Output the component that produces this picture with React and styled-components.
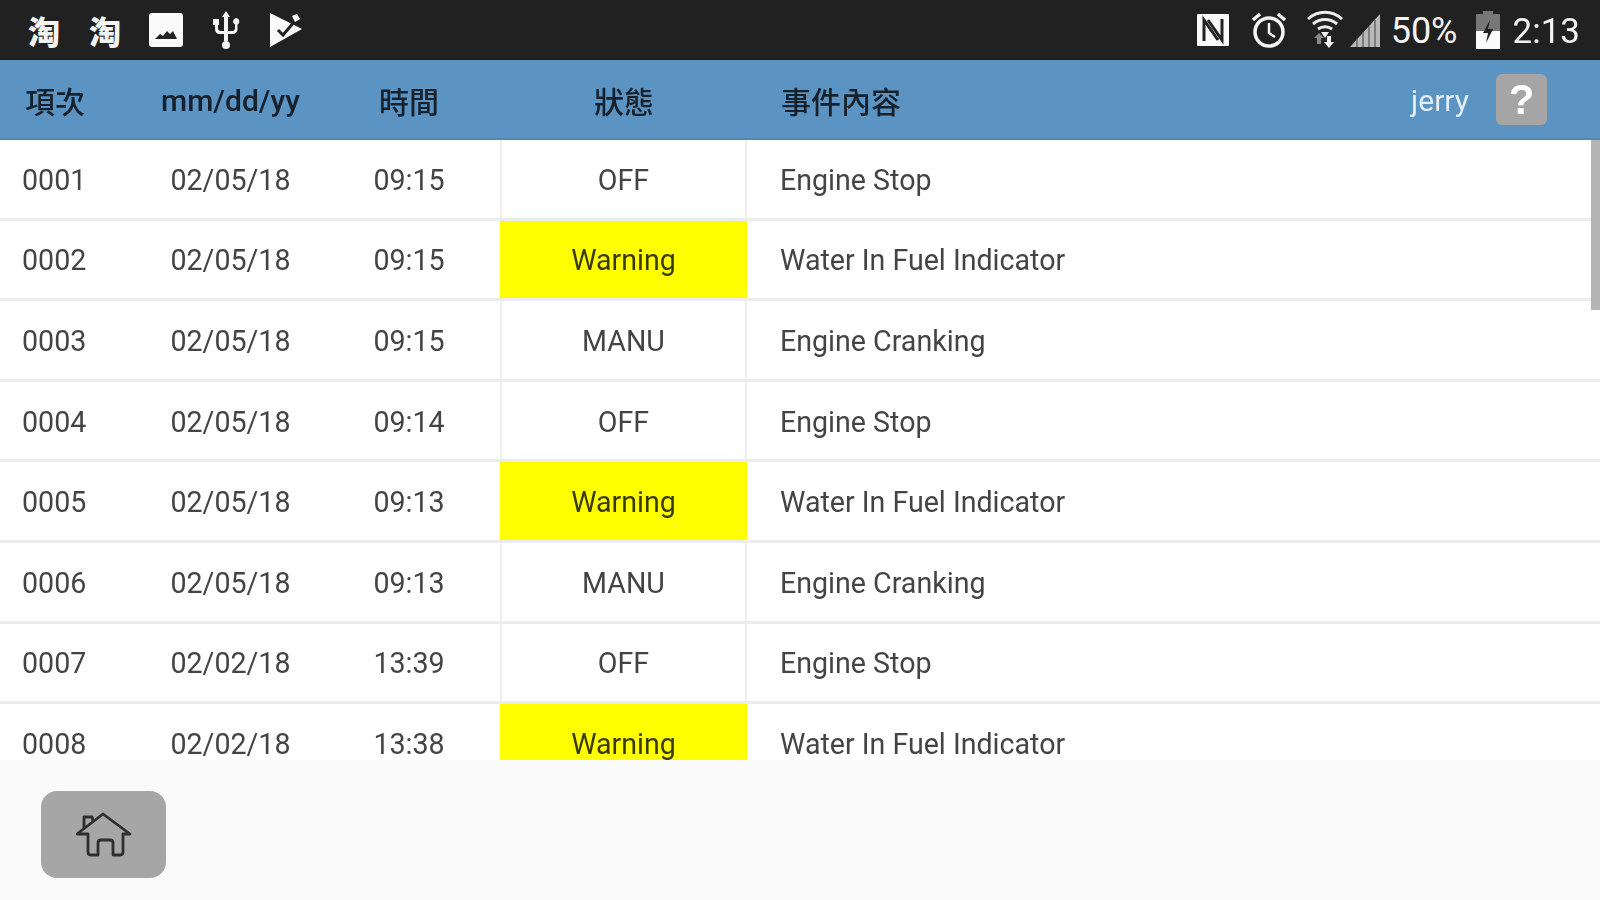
import styled, { createGlobalStyle } from "styled-components"

const Global = createGlobalStyle`
  html, body { margin: 0; padding: 0; background: #fafafa; }
  body { font-family: Roboto, "Noto Sans CJK TC", sans-serif; }
`

const Screen = styled.div`
  width: 1600px;
  height: 900px;
  display: flex;
  flex-direction: column;
  overflow: hidden;
  filter: blur(0.7px);
`

const StatusBar = styled.div`
  height: 59px;
  flex: none;
  background: #212121;
  border-bottom: 1px solid #2a1c10;
  display: flex;
  align-items: center;
  justify-content: space-between;
  padding: 0 20px 0 26px;
  color: #fff;
`

const StatusLeft = styled.div`
  display: flex;
  align-items: center;
  gap: 27px;
`

const StatusRight = styled.div`
  display: flex;
  align-items: center;
`

const NoticeGlyph = styled.span`
  width: 36px;
  margin-right: -2px;
  text-align: center;
  font: 900 32px "Noto Sans CJK SC", sans-serif;
  line-height: 36px;
  color: #f4f4f4;
`

const StatusText = styled.span`
  padding-top: 3px;
  font: 400 ${(p) => p.$size || 35}px Roboto, sans-serif;
  color: #f2f2f2;
`

const Header = styled.div`
  height: 80px;
  flex: none;
  box-sizing: border-box;
  padding-top: 2px;
  background: #5b94c3;
  border-bottom: 2px solid #5587b5;
  display: grid;
  grid-template-columns: 110px 241px 116px 314px 1fr;
  align-items: center;
  font-size: 30px;
  font-weight: 500;
  color: #17212b;
`

const HeadCell = styled.div`
  text-align: center;
`

const HeadRight = styled.div`
  display: flex;
  align-items: center;
  padding-right: 53px;
`

const User = styled.span`
  margin-left: auto;
  margin-right: 27px;
  color: #e3eef7;
  font-weight: 400;
`

const HelpButton = styled.div`
  width: 51px;
  height: 51px;
  margin-top: -1px;
  border-radius: 6px;
  background: #a5a5a5;
  color: #fff;
  font: 700 42px "Liberation Sans", sans-serif;
  display: flex;
  align-items: center;
  justify-content: center;
`

const TableArea = styled.div`
  position: relative;
  flex: 1;
  overflow: hidden;
  background: #fff;
`

const ScrollThumb = styled.div`
  position: absolute;
  top: 0;
  right: 0;
  width: 9px;
  height: 170px;
  background: #b4b4b4;
`

const Row = styled.div`
  height: 80.6px;
  box-sizing: border-box;
  border-bottom: 3px solid #ececec;
  display: grid;
  grid-template-columns: 110px 241px 116px 33px 247px 1fr;
  align-items: center;
  font-size: 28.6px;
  color: #444;
`

const Cell = styled.div`
  text-align: center;
  padding-top: 2px;
`

const NumberCell = styled(Cell)`
  text-align: left;
  padding-left: 22px;
`

const Spacer = styled.div``

const StatusCell = styled.div`
  align-self: stretch;
  box-sizing: border-box;
  padding-top: 2px;
  display: flex;
  align-items: center;
  justify-content: center;
  background: ${(p) => (p.$warn ? "#ffff00" : "transparent")};
  color: ${(p) => (p.$warn ? "#3a3a00" : "#444")};
  border-left: 2px solid ${(p) => (p.$warn ? "#ffff00" : "#eceef2")};
  border-right: 2px solid ${(p) => (p.$warn ? "#ffff00" : "#eceef2")};
`

const EventCell = styled.div`
  padding-left: 33px;
  padding-top: 2px;
`

const Footer = styled.div`
  height: 140px;
  flex: none;
  background: #fafafa;
  padding: 31px 0 0 41px;
  box-sizing: border-box;
`

const HomeButton = styled.div`
  width: 125px;
  height: 87px;
  border-radius: 16px;
  background: #a6a6a6;
  display: flex;
  align-items: center;
  justify-content: center;
`

const rows = [
  ["0001", "02/05/18", "09:15", "OFF", "Engine Stop"],
  ["0002", "02/05/18", "09:15", "Warning", "Water In Fuel Indicator"],
  ["0003", "02/05/18", "09:15", "MANU", "Engine Cranking"],
  ["0004", "02/05/18", "09:14", "OFF", "Engine Stop"],
  ["0005", "02/05/18", "09:13", "Warning", "Water In Fuel Indicator"],
  ["0006", "02/05/18", "09:13", "MANU", "Engine Cranking"],
  ["0007", "02/02/18", "13:39", "OFF", "Engine Stop"],
  ["0008", "02/02/18", "13:38", "Warning", "Water In Fuel Indicator"],
]

const ImageIcon = () => (
  <svg width="36" height="36" viewBox="0 0 36 36">
    <rect x="1" y="1" width="34" height="34" rx="3" fill="#fafafa" />
    <path d="M7 27l5-5 3 2 4-5 3 3 3-3 4 8z" fill="#222" />
  </svg>
)

const UsbIcon = () => (
  <svg width="30" height="38" viewBox="0 0 30 38" fill="#f5f5f5">
    <path d="M15 0l4 6h-2v24h-4V6h-2z" />
    <circle cx="15" cy="34" r="4" />
    <path d="M2 8h6v6H7v3c0 2 1 3 3 3h4v3H9c-3 0-5-2-5-5v-4H2z" />
    <path d="M25 7a3.500 3.500 0 0 1 1.500 6.600V18c0 3-2 5-5 5H16v-3h5c2 0 3-1 3-3v-3.400A3.500 3.500 0 0 1 25 7z" />
  </svg>
)

const FlagCheckIcon = () => (
  <svg width="36" height="36" viewBox="0 0 36 36">
    <path d="M2 1l32 16L2 35z" fill="#fafafa" />
    <path d="M10 18l5 5 12-14" fill="none" stroke="#222" strokeWidth="3" />
    <path d="M22 0l-6 7 6 3 6-6z" fill="#212121" />
    <path d="M24 4l5-2 3 5-5 3z" fill="#fafafa" />
  </svg>
)

const NfcIcon = () => (
  <svg width="34" height="36" viewBox="0 0 34 36" style={{ marginRight: 20 }}>
    <rect x="1" y="2" width="32" height="32" rx="1" fill="#fafafa" />
    <path d="M8 29V8l14 20" fill="none" stroke="#222" strokeWidth="3" />
    <path d="M26 7v21L12 8" fill="none" stroke="#222" strokeWidth="3" />
  </svg>
)

const AlarmIcon = () => (
  <svg width="38" height="38" viewBox="0 0 38 38" fill="none" stroke="#f5f5f5" style={{ marginRight: 19 }}>
    <circle cx="19" cy="21" r="14" strokeWidth="3.500" />
    <path d="M19 12v10l6 4" strokeWidth="2.500" />
    <path d="M3 9l7-6M35 9l-7-6" strokeWidth="3.500" />
  </svg>
)

const WifiIcon = () => (
  <svg width="36" height="40" viewBox="0 0 36 40" fill="none" stroke="#eee" strokeWidth="3" style={{ marginRight: 6 }}>
    <path d="M1 9c10-9 24-9 34 0" />
    <path d="M6 14c7-6 17-6 24 0" />
    <path d="M11 19c4-3 10-3 14 0" />
    <path d="M18 28l-4-6h8z" fill="#eee" stroke="none" />
    <path d="M10 34v-6l-3 0 5-5 5 5h-3v6z" fill="#888" stroke="none" />
    <path d="M24 26v6h3l-5 6-5-6h3v-6z" fill="#f5f5f5" stroke="none" />
  </svg>
)

const SignalIcon = () => (
  <svg width="32" height="36" viewBox="0 0 32 36" style={{ marginRight: 10 }}>
    <path d="M1 35L31 2v33z" fill="#b8b8b8" />
    <path d="M8 35v-9M14 35v-15M20 35v-21M26 35v-27" stroke="#555" strokeWidth="1.200" />
  </svg>
)

const BatteryIcon = () => (
  <svg width="26" height="38" viewBox="0 0 26 38" style={{ margin: "0 12px 0 17px" }}>
    <rect x="8" y="0" width="10" height="4" fill="#777" />
    <rect x="1" y="3" width="24" height="35" rx="1" fill="#777" />
    <rect x="1" y="20" width="24" height="18" fill="#fafafa" />
    <path d="M15 9l-7 13h5l-2 10 7-14h-5z" fill="#212121" />
  </svg>
)

const HomeIcon = () => (
  <svg width="56" height="46" viewBox="0 0 56 46" fill="none" stroke="#2e2e2e" strokeWidth="2.800" strokeLinejoin="round" strokeLinecap="round">
    <path d="M1 22L27 2l27 20h-7v18q0 3-3 3h-7V31q0-3-3-3h-9q-3 0-3 3v12h-7q-3 0-3-3V22z" />
    <path d="M8 16V5h8l1 4" />
  </svg>
)

const App = () => {
  return (
    <Screen>
      <Global />
      <StatusBar>
        <StatusLeft>
          <NoticeGlyph>淘</NoticeGlyph>
          <NoticeGlyph>淘</NoticeGlyph>
          <ImageIcon />
          <UsbIcon />
          <FlagCheckIcon />
        </StatusLeft>
        <StatusRight>
          <NfcIcon />
          <AlarmIcon />
          <WifiIcon />
          <SignalIcon />
          <StatusText $size={36}>50%</StatusText>
          <BatteryIcon />
          <StatusText>2:13</StatusText>
        </StatusRight>
      </StatusBar>
      <Header>
        <HeadCell>項次</HeadCell>
        <HeadCell>mm/dd/yy</HeadCell>
        <HeadCell>時間</HeadCell>
        <HeadCell>狀態</HeadCell>
        <HeadRight>
          <span>事件內容</span>
          <User>jerry</User>
          <HelpButton>?</HelpButton>
        </HeadRight>
      </Header>
      <TableArea>
        {rows.map((r) => (
          <Row key={r[0]}>
            <NumberCell>{r[0]}</NumberCell>
            <Cell>{r[1]}</Cell>
            <Cell>{r[2]}</Cell>
            <Spacer />
            <StatusCell $warn={r[3] === "Warning"}>{r[3]}</StatusCell>
            <EventCell>{r[4]}</EventCell>
          </Row>
        ))}
        <ScrollThumb />
      </TableArea>
      <Footer>
        <HomeButton>
          <HomeIcon />
        </HomeButton>
      </Footer>
    </Screen>
  )
}

export default App
